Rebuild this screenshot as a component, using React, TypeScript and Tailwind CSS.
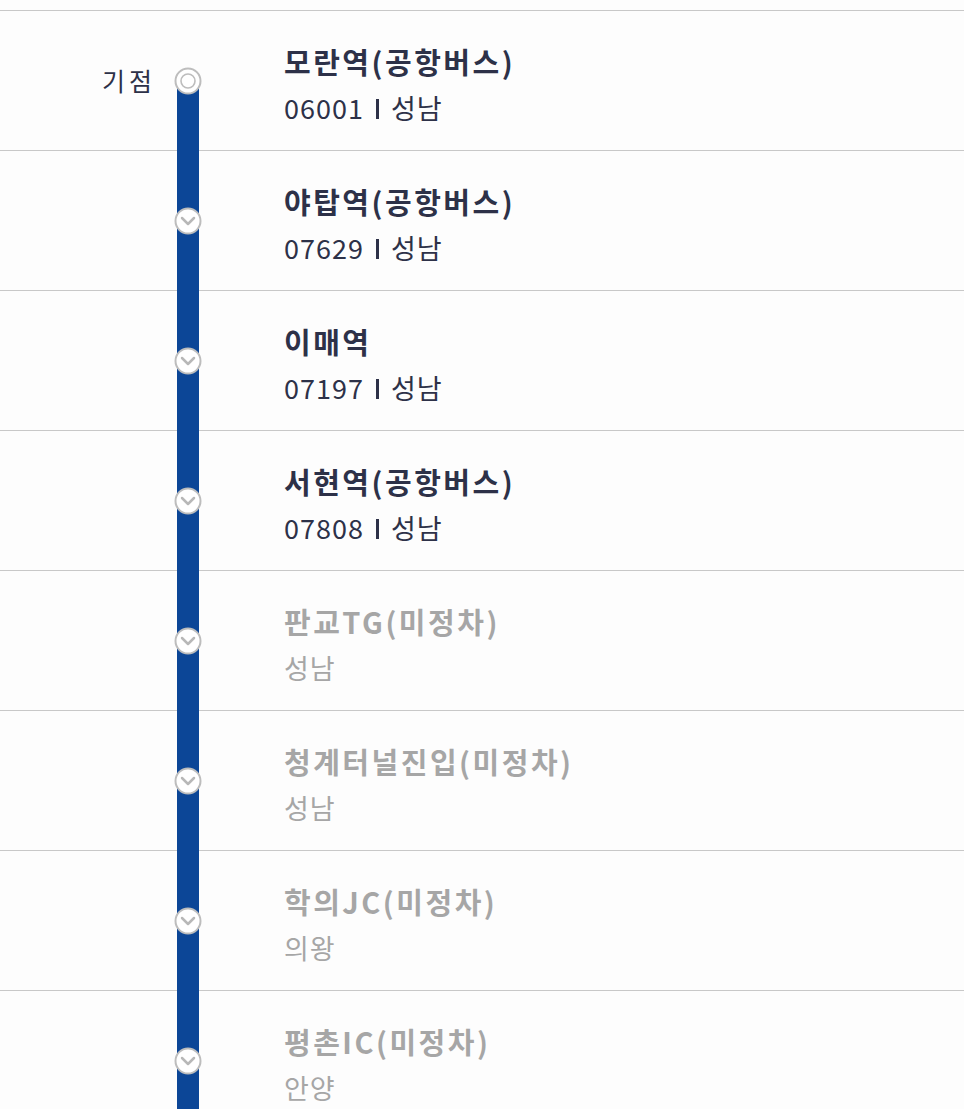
const stops = [
  { name: "모란역(공항버스)", code: "06001", city: "성남", active: true, label: "기점" },
  { name: "야탑역(공항버스)", code: "07629", city: "성남", active: true },
  { name: "이매역", code: "07197", city: "성남", active: true },
  { name: "서현역(공항버스)", code: "07808", city: "성남", active: true },
  { name: "판교TG(미정차)", city: "성남", active: false },
  { name: "청계터널진입(미정차)", city: "성남", active: false },
  { name: "학의JC(미정차)", city: "의왕", active: false },
  { name: "평촌IC(미정차)", city: "안양", active: false },
];

function StartIcon() {
  return (
    <svg width="28" height="28" viewBox="0 0 28 28" className="relative">
      <circle cx="14" cy="14" r="12.5" fill="#ffffff" stroke="#bdbdbd" strokeWidth="2" />
      <circle cx="14" cy="14" r="7" fill="none" stroke="#bdbdbd" strokeWidth="1.6" />
    </svg>
  );
}

function DownIcon() {
  return (
    <svg width="28" height="28" viewBox="0 0 28 28" className="relative">
      <circle cx="14" cy="14" r="12.5" fill="#ffffff" stroke="#bdbdbd" strokeWidth="2" />
      <path d="M8 11 L14 17 L20 11" fill="none" stroke="#b8b8b8" strokeWidth="2.5" strokeLinecap="round" strokeLinejoin="round" />
    </svg>
  );
}

export default function App() {
  return (
    <div
      className="w-full min-h-[1109px] bg-[#fdfdfd] pt-[10px] overflow-hidden"
      style={{ fontFamily: '"Noto Sans CJK KR", "Noto Sans", sans-serif' }}
    >
      {stops.map((stop, index) => (
        <div key={index} className="flex h-[140px] border-t border-[#c8c8c8]">
          <div className="w-[156px] flex items-center justify-end">
            {stop.label && (
              <span className="text-[25px] tracking-[4px] text-[#2d3148] leading-none">
                {stop.label}
              </span>
            )}
          </div>
          <div className="relative w-[64px] flex items-center justify-center">
            <div
              className={
                index === 0
                  ? "absolute left-[21px] w-[22px] top-[70px] bottom-[-1px] bg-[#0c4697]"
                  : "absolute left-[21px] w-[22px] top-[-1px] bottom-[-1px] bg-[#0c4697]"
              }
            />
            {index === 0 ? <StartIcon /> : <DownIcon />}
          </div>
          <div className="ml-[64px] pt-[7px] flex flex-col justify-center">
            <p
              className={
                stop.active
                  ? "text-[29px] font-bold tracking-[2.5px] leading-[40px] text-[#2d3148]"
                  : "text-[29px] font-bold tracking-[2.5px] leading-[40px] text-[#a6a6a6]"
              }
            >
              {stop.name}
            </p>
            <p
              className={
                stop.active
                  ? "mt-[7px] flex items-center text-[27px] tracking-[1px] leading-[40px] text-[#2d3148]"
                  : "mt-[7px] flex items-center text-[27px] tracking-[1px] leading-[40px] text-[#a6a6a6]"
              }
            >
              {stop.code && (
                <>
                  <span>{stop.code}</span>
                  <span className="mx-[12px] mt-[3px] inline-block w-[3px] h-[20px] bg-[#2d3148]" />
                </>
              )}
              <span>{stop.city}</span>
            </p>
          </div>
        </div>
      ))}
    </div>
  );
}
